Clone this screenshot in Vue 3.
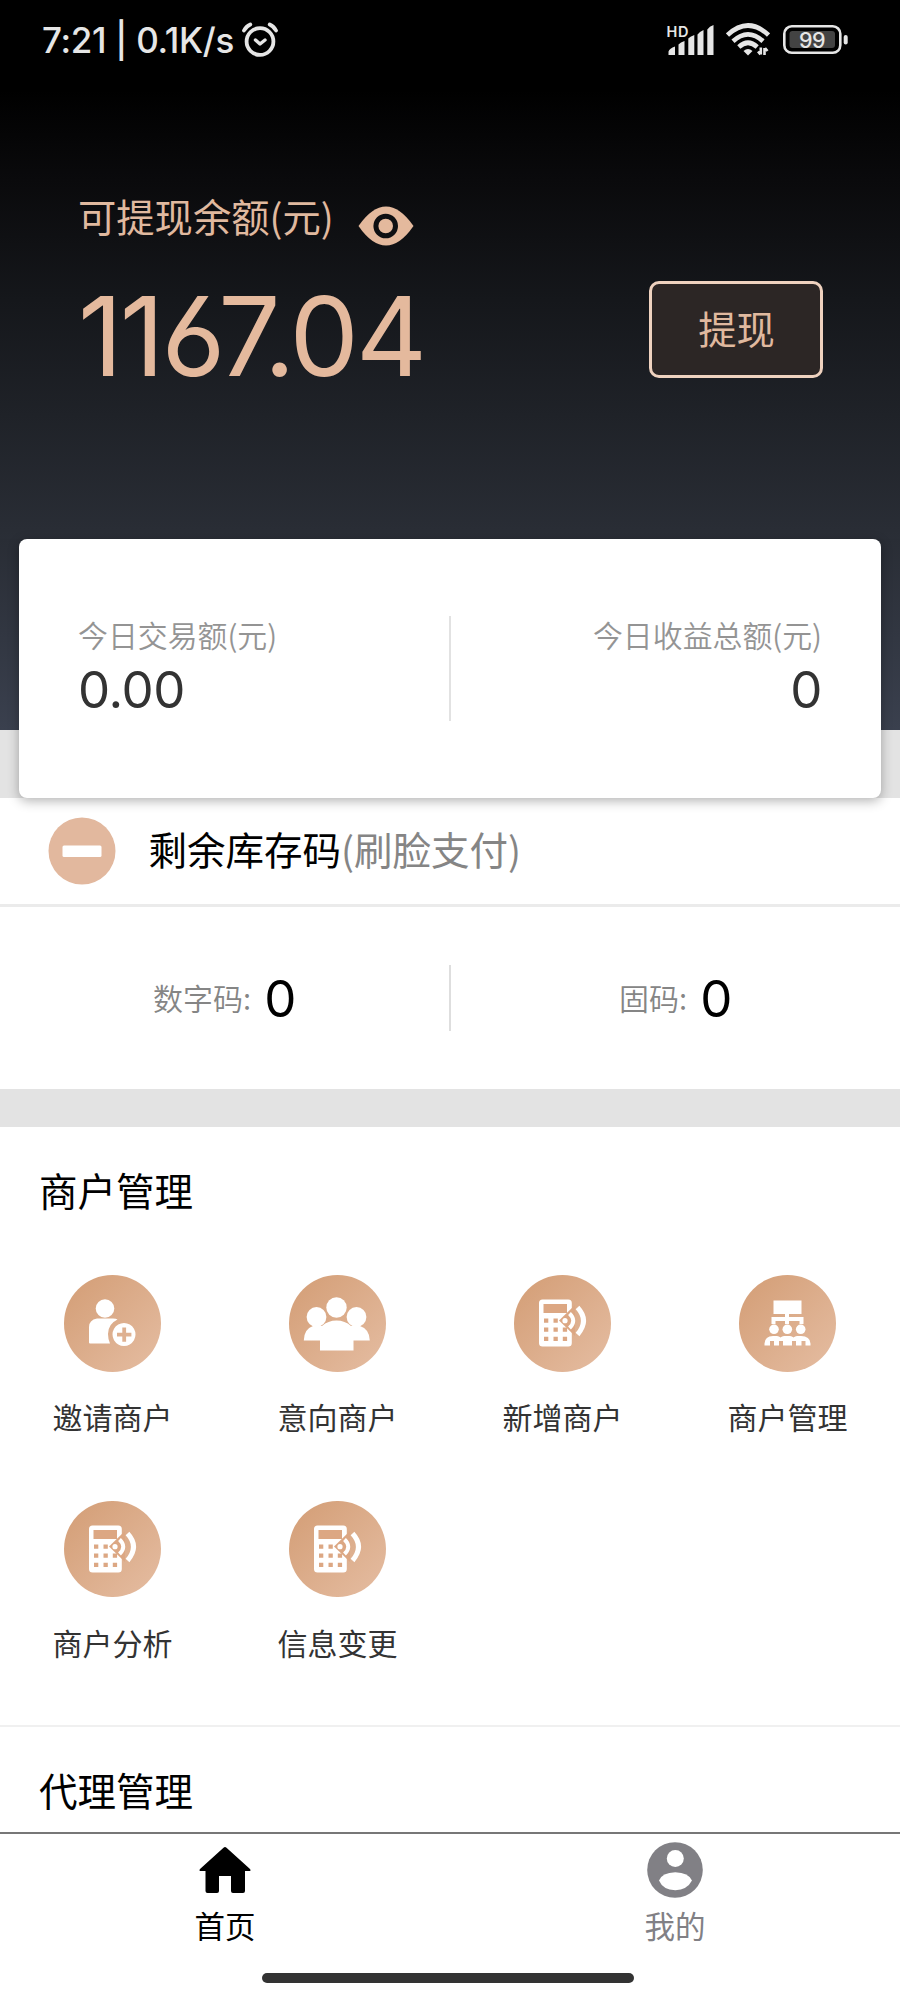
<script setup>
const merchantItems = [
  { label: '邀请商户', icon: 'invite' },
  { label: '意向商户', icon: 'group' },
  { label: '新增商户', icon: 'pos' },
  { label: '商户管理', icon: 'org' },
  { label: '商户分析', icon: 'pos' },
  { label: '信息变更', icon: 'pos' },
]
</script>

<template>
  <div class="screen">
    <header class="hero">
      <div class="status">
        <span class="clock">7:21 | 0.1K/s</span>
        <svg class="alarm" width="38" height="36" viewBox="0 0 38 36" fill="none" stroke="#e6e6e6" stroke-linecap="round">
          <circle cx="19" cy="19.500" r="13.400" stroke-width="3.800" />
          <path d="M14.500 18L19 22L24 18" stroke-width="3.400" stroke-linejoin="round" />
          <path d="M3 8.500Q5 4.500 9.300 2.500M35 8.500Q33 4.500 28.700 2.500" stroke-width="3.800" />
        </svg>
        <div class="spacer"></div>
        <svg class="signal" width="48" height="32" viewBox="0 0 48 32" fill="#e6e6e6">
          <text class="hd" x="0.500" y="13" textLength="22">HD</text>
          <path d="M2.500 31v-3.500q1-3 6.500-5V31zM12.500 31V20.500q2-2.500 6-3.500v14zM22.300 31V14.500q1.500-2 6-3.500v20zM31.500 31V10.500q2-3 6-4.500v25zM41.300 31V5.500Q43.500 2 47.500 1v30z" />
        </svg>
        <svg class="wifi" width="44" height="34" viewBox="0 0 44 34" fill="none" stroke="#e6e6e6" stroke-width="4.600">
          <path d="M1.500 12Q22-7 42.500 12M7 18.200Q22 4.500 37 18.200M12.800 24Q22 15.500 31.200 24" />
          <path d="M17.500 28Q22 24 26.500 28L22 32.500z" fill="#e6e6e6" stroke="none" />
          <path d="M34.800 24.500v7M32 28.500l2.500 3M38.500 32v-7M41.500 28l-2.500-3" stroke-width="2.600" />
        </svg>
        <svg class="battery" width="65" height="30" viewBox="0 0 65 30">
          <rect x="1.300" y="1.300" width="56" height="26.500" rx="7.500" fill="none" stroke="#e6e6e6" stroke-width="2.600" />
          <rect x="6.500" y="6" width="45.500" height="17" rx="3" fill="#434343" />
          <text class="level" x="29" y="22.700" text-anchor="middle">99</text>
          <rect x="60.700" y="10" width="4" height="9.500" rx="2" fill="#e6e6e6" />
        </svg>
      </div>

      <div class="balance">
        <div class="balance-info">
          <div class="balance-label">
            <span>可提现余额(元)</span>
            <svg class="eye" width="56" height="40" viewBox="0 0 56 40">
              <path d="M.500 20Q14 .500 28 .500T55.500 20Q42 39.500 28 39.500T.500 20z" fill="#e4b99d" />
              <circle cx="27.700" cy="20" r="9.800" fill="#e4b99d" stroke="#0e0f12" stroke-width="5" />
            </svg>
          </div>
          <div class="amount">1167.04</div>
        </div>
        <button class="withdraw">提现</button>
      </div>
    </header>

    <div class="today-wrap">
      <section class="today">
        <div class="today-cell">
          <div class="today-label">今日交易额(元)</div>
          <div class="num">0.00</div>
        </div>
        <i class="today-line"></i>
        <div class="today-cell right">
          <div class="today-label">今日收益总额(元)</div>
          <div class="num">0</div>
        </div>
      </section>
    </div>

    <section class="stock">
      <div class="stock-title">
        <svg width="68" height="68" viewBox="0 0 68 68">
          <circle cx="34" cy="34" r="33.500" fill="#e2b89e" />
          <rect x="14.500" y="28.500" width="39" height="11.500" rx="1.500" fill="#fff" />
        </svg>
        <span>剩余库存码<em>(刷脸支付)</em></span>
      </div>
      <div class="codes">
        <div class="code"><span>数字码:</span><b class="num">0</b></div>
        <i class="code-line"></i>
        <div class="code"><span>固码:</span><b class="num">0</b></div>
      </div>
    </section>

    <section class="menu">
      <h2>商户管理</h2>
      <div class="grid">
        <div v-for="item in merchantItems" :key="item.label" class="item">
          <div class="disc">
            <svg v-if="item.icon === 'invite'" width="96" height="96" viewBox="0 0 96 96" fill="#fff">
              <circle cx="41" cy="33.500" r="9.300" />
              <path d="M33 43.500H49Q52 43.500 53.500 44.500Q44 49 44 59Q44 64 46 68.500H26q-1 0-1-1V52Q25 45 33 43.500z" />
              <path fill-rule="evenodd" d="M60 48a11.500 11.500 0 1 0 .01 0zM58.300 52.500h3.800v5.300h5.300v3.800h-5.300v5.200h-3.800v-5.200H53v-3.800h5.300z" />
            </svg>
            <svg v-else-if="item.icon === 'group'" width="96" height="96" viewBox="0 0 96 96" fill="#fff">
              <circle cx="47.500" cy="32.500" r="10.200" />
              <circle cx="27.500" cy="42" r="9.900" />
              <circle cx="67.500" cy="42" r="9.900" />
              <path d="M31 75.500V65.500H14.800Q15 54 24 51H33Q39 45.500 47.500 45.500T62 51H71Q80.500 54 80.800 65.500H64.500V75.500z" />
            </svg>
            <svg v-else-if="item.icon === 'org'" width="96" height="96" viewBox="0 0 96 96" fill="#fff">
              <path d="M34.500 25.500h28V39H50v3h14.500v7h-4v-3H50v3h-4v-3h-9.500v3h-4v-7H46v-3H34.500z" />
              <circle cx="35" cy="54.300" r="4.800" />
              <circle cx="48.300" cy="54.300" r="4.800" />
              <circle cx="61.700" cy="54.300" r="4.800" />
              <path d="M25.500 70.500v-2Q26 61 34 61h4q2 0 3.500 1.500Q43 61 45 61h6q2 0 3.500 1.500Q56 61 58 61h4q9 0 9.500 7.500v2h-5V66h-4v4.500H57V66h-4v4.500h-9V66h-4v4.500h-5V66h-4v4.500z" />
            </svg>
            <svg v-else width="96" height="96" viewBox="0 0 96 96">
              <rect x="25" y="24.500" width="32.800" height="47" rx="3.500" fill="#fff" />
              <path d="M29.500 29h23.500v9h-23.500zM30 43.500h4.300v4.300H30zM39.500 43.500h4.300v4.300h-4.300zM30 52.500h4.300v4.300H30zM39.500 52.500h4.300v4.300h-4.300zM48.800 52.500h4.300v4.300h-4.300zM30 61.800h4.300v4.300H30zM39.500 61.800h4.300v4.300h-4.300zM48.800 61.800h4.300v4.300h-4.300z" fill="#dca783" />
              <path d="M45 45.500L61 30V61z" fill="#dca783" />
              <circle cx="51" cy="45.700" r="2.600" fill="#fff" />
              <path d="M55.500 38.500Q63 45.500 55.500 53" fill="none" stroke="#fff" stroke-width="4" />
              <path d="M63.500 32.500Q75.500 45.500 63.500 59.500" fill="none" stroke="#fff" stroke-width="5" />
            </svg>
          </div>
          <span>{{ item.label }}</span>
        </div>
      </div>
    </section>

    <section class="agent"><h2>代理管理</h2></section>

    <nav class="tabs">
      <div class="tab active">
        <svg width="56" height="56" viewBox="0 0 56 56">
          <path d="M26.500 5.700Q28 4.300 29.500 5.700L53 27Q54.500 29 52 29H48V49q0 2-2 2H36q-2 0-2-2V34H22V49q0 2-2 2H10.500q-2 0-2-2V29H4Q1.500 29 3 27z" />
        </svg>
        <span>首页</span>
      </div>
      <div class="tab">
        <svg width="56" height="56" viewBox="0 0 56 56">
          <circle cx="28" cy="28" r="27.800" fill="#818085" />
          <circle cx="28.300" cy="16.500" r="8.500" fill="#fff" />
          <path d="M12 38.500Q15 30.500 28.300 30.200Q41.500 30.500 45 38.500Q40 48 28.300 48.200Q16 48 12 38.500z" fill="#fff" />
        </svg>
        <span>我的</span>
      </div>
    </nav>
    <div class="gesture"></div>
  </div>
</template>

<style>
body { margin: 0; background: #fff; }
</style>

<style scoped>
.screen {
  width: 900px;
  height: 2000px;
  overflow: hidden;
  display: flex;
  flex-direction: column;
  background: #fff;
  font-family: "Noto Sans CJK SC", sans-serif;
  color: #000;
}
.screen svg { display: block; flex: none; }
.hero {
  height: 539px;
  flex: none;
  background: linear-gradient(180deg, #000 0, #000 90px, #0a0a0c 180px, #15171b 300px, #292d35 530px, #3a404e 730px);
}
.status {
  display: flex;
  height: 80px;
  padding: 0 52.5px 0 42px;
  align-items: center;
}
.clock {
  font: 500 35px/40px Inter, sans-serif;
  width: 199px;
  white-space: nowrap;
  letter-spacing: -0.3px;
  color: #e6e6e6;
}
.spacer { flex: 1; }
.signal { margin-right: 12px; }
.wifi { margin-right: 13px; }
.hd { font: 600 14.5px Inter, sans-serif; }
.level { font: 500 21.5px Inter, sans-serif; letter-spacing: -0.5px; fill: #e6e6e6; }
.balance {
  display: flex;
  justify-content: space-between;
  padding: 108px 77px 0 78px;
}
.balance-label {
  display: flex;
  height: 60px;
  font-size: 38.3px;
  line-height: 56px;
  color: #e0b99f;
}
.eye { margin: 18px 0 0 24px; }
.amount {
  margin-top: 33px;
  font: 400 110px/110px Inter, sans-serif;
  font-feature-settings: "cv03", "ss03";
  letter-spacing: -3px;
  color: #e4b99d;
}
.withdraw {
  box-sizing: border-box;
  width: 174px;
  height: 97px;
  margin: 93px 0 0;
  padding: 0 0 5px 1px;
  border: 3px solid #efd2bf;
  border-radius: 10px;
  background: #2c2625;
  font: 400 38.3px "Noto Sans CJK SC", sans-serif;
  color: #e0b99f;
}
/* the card straddles the dark header and the grey band below it */
.today-wrap {
  height: 259px;
  flex: none;
  padding: 0 19px;
  background: linear-gradient(180deg, #292d35 0, #3a404e 191px, #e3e3e3 191px);
}
.today {
  box-sizing: border-box;
  position: relative;
  display: flex;
  height: 259px;
  padding: 77px 59px 0;
  border-radius: 8px;
  background: #fff;
  box-shadow: 0 3px 12px rgba(0, 0, 0, 0.3);
}
.today-cell { flex: 1; }
.right { text-align: right; }
.today-label { font-size: 29.9px; line-height: 36px; font-weight: 350; color: #949494; }
.num { font: 400 51px/56px Inter, sans-serif; letter-spacing: -0.4px; color: #333; }
.today-cell .num { margin-top: 10px; }
.today-line { width: 2px; height: 105px; background: #e2e2e2; }
.stock { height: 291px; flex: none; border-bottom: 38px solid #e3e3e3; }
.stock-title {
  display: flex;
  align-items: center;
  box-sizing: border-box;
  height: 109px;
  padding-left: 48px;
  gap: 32.5px;
  font-size: 38.5px;
  line-height: 60px;
  border-bottom: 3px solid #ebebeb;
}
.stock-title span { margin-top: -7px; }
.stock-title em { font-style: normal; color: #858585; }
.codes { display: flex; align-items: center; height: 182px; }
.code { flex: 1; display: flex; justify-content: center; align-items: center; gap: 13px; }
.code span { margin-top: -3px; font-size: 30px; line-height: 40px; font-weight: 350; color: #858585; }
.code .num { margin-top: 1px; color: #000; }
.code-line { width: 2px; height: 66px; background: #dedede; }
h2 { margin: 0; padding-left: 39px; font-weight: 400; font-size: 38.5px; line-height: 60px; }
.menu { height: 600px; flex: none; padding-top: 32px; box-sizing: border-box; border-bottom: 2px solid #f0f0f0; }
.grid { display: grid; grid-template-columns: repeat(4, 225px); grid-auto-rows: 225.5px; margin-top: 56px; }
.item { display: flex; flex-direction: column; align-items: center; font-size: 30px; line-height: 40px; color: #333; }
.disc { width: 96.5px; height: 96.5px; border-radius: 50%; background: linear-gradient(135deg, #d39d75, #e5bda2); margin-bottom: 24.5px; }
.agent { box-sizing: border-box; height: 105px; flex: none; padding-top: 32px; }
.tabs { display: flex; flex: none; height: 141px; border-top: 2px solid #777; box-sizing: border-box; padding-top: 8px; }
.tab { flex: 1; display: flex; flex-direction: column; align-items: center; font-size: 30.5px; line-height: 40px; color: #818085; }
.tab span { margin-top: 7px; }
.active { color: #000; }
.gesture { width: 372px; height: 10px; flex: none; margin-left: 262px; border-radius: 5px; background: #333; }
</style>
